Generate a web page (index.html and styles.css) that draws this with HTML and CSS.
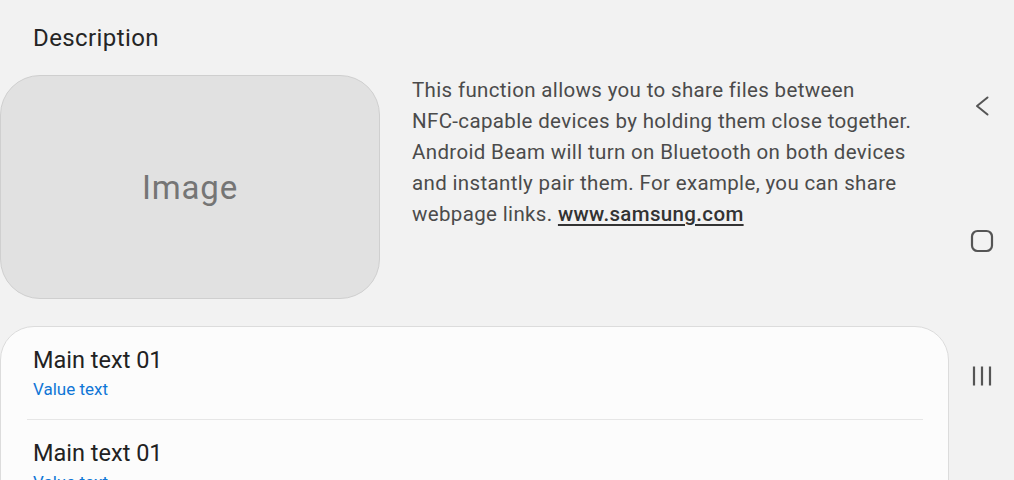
FILE: index.html
```html
<!DOCTYPE html>
<html>
<head>
<meta charset="utf-8">
<link rel="stylesheet" href="styles.css">
</head>
<body>
<div class="screen">
  <main class="content">
    <h1 class="title">Description</h1>
    <section class="desc-row">
      <div class="image-box">Image</div>
      <p class="desc-text">This function allows you to share files between <span class="nowrap">NFC-capable</span> devices by holding them close together. Android Beam will turn on Bluetooth on both devices and instantly pair them. For example, you can share webpage links. <a class="link" href="#">www.samsung.com</a></p>
    </section>
    <section class="card">
      <div class="item">
        <div class="main-text">Main text 01</div>
        <div class="value-text">Value text</div>
      </div>
      <div class="divider"></div>
      <div class="item">
        <div class="main-text">Main text 01</div>
        <div class="value-text">Value text</div>
      </div>
    </section>
  </main>
  <nav class="navbar">
    <div class="nav-slot">
      <svg width="24" height="24" viewBox="0 0 24 24"><path d="M17.5 3.5 L7 12 L17.5 20.5" fill="none" stroke="#555" stroke-width="2" stroke-linecap="round" stroke-linejoin="round"/></svg>
    </div>
    <div class="nav-slot">
      <svg width="24" height="24" viewBox="0 0 24 24"><rect x="2" y="2" width="20" height="20" rx="5.5" fill="none" stroke="#555" stroke-width="2.2"/></svg>
    </div>
    <div class="nav-slot">
      <svg width="24" height="24" viewBox="0 0 24 24"><path d="M4 2.5 V21.5 M12 2.5 V21.5 M20 2.5 V21.5" stroke="#555" stroke-width="2.2"/></svg>
    </div>
  </nav>
</div>
</body>
</html>
```

FILE: styles.css
```css
html, body {
  margin: 0;
  padding: 0;
  height: 480px;
  overflow: hidden;
  background: #f2f2f2;
  font-family: Roboto, "Noto Sans", sans-serif;
}

.screen {
  display: flex;
  width: 1014px;
  height: 480px;
}

.content {
  width: 950px;
  flex: none;
}

.title {
  margin: 24px 0 23px 33px;
  font-size: 24px;
  line-height: 28px;
  font-weight: 400;
  letter-spacing: 0.4px;
  color: #252525;
}

.desc-row {
  display: flex;
  gap: 32px;
  align-items: flex-start;
}

.image-box {
  width: 378px;
  height: 222px;
  flex: none;
  background: #e1e1e1;
  border: 1px solid #cfcfcf;
  border-radius: 40px;
  display: flex;
  align-items: center;
  justify-content: center;
  font-size: 33px;
  letter-spacing: 0.8px;
  color: #757575;
}

.desc-text {
  margin: 0;
  width: 515px;
  font-size: 20.5px;
  line-height: 31px;
  letter-spacing: 0.35px;
  color: #4b4b4b;
}

.nowrap {
  white-space: nowrap;
}

.link {
  color: #333;
  font-weight: 500;
  text-decoration: underline;
  text-underline-offset: 3px;
}

.card {
  margin-top: 27px;
  width: 947px;
  height: 300px;
  background: #fcfcfc;
  border: 1px solid #dcdcdc;
  border-radius: 34px;
}

.item {
  padding: 19px 0 20px 32px;
}

.main-text {
  font-size: 23.5px;
  line-height: 28px;
  color: #222;
}

.value-text {
  margin-top: 5px;
  font-size: 17px;
  line-height: 20px;
  color: #1076d6;
}

.divider {
  height: 1px;
  background: #e6e6e6;
  margin: 0 25px 0 26px;
}

.navbar {
  width: 64px;
  flex: none;
  padding-top: 38px;
  display: flex;
  flex-direction: column;
}

.nav-slot {
  height: 135px;
  display: flex;
  align-items: center;
  justify-content: center;
}
```
